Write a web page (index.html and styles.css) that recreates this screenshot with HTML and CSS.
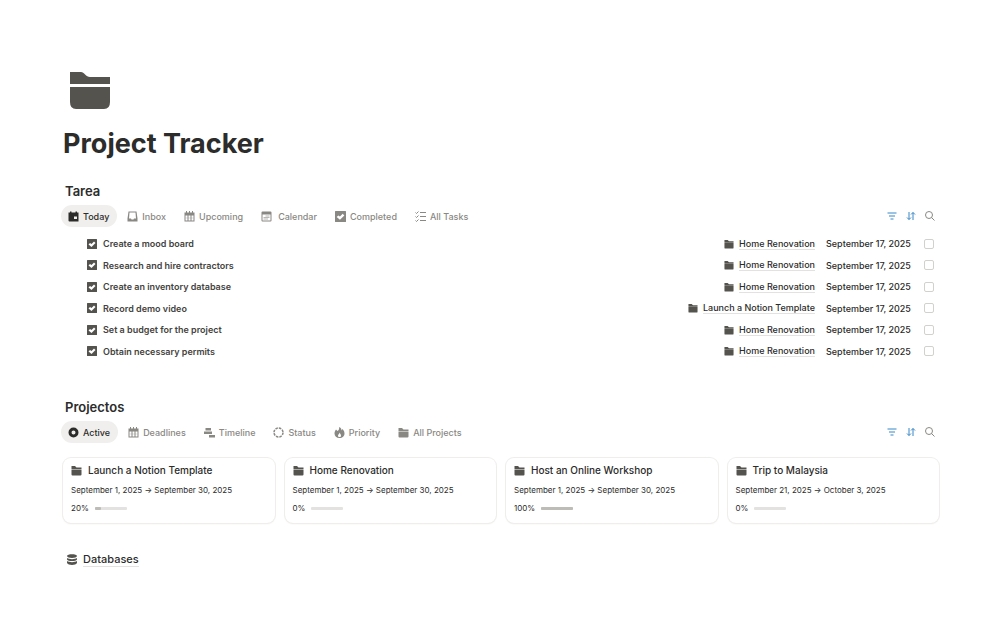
FILE: index.html
```html
<!DOCTYPE html>
<html lang="en">
<head>
    <meta charset="UTF-8">
    <meta name="viewport" content="width=device-width, initial-scale=1.0">
    <title>Project Tracker</title>
    <link rel="stylesheet" href="styles.css">
</head>
<body>
    <svg class="sprite" aria-hidden="true">
        <symbol id="folder" viewBox="0 0 40 37">
            <path d="M0 0h11c3 0 5 5 9 5h20v7H0zM0 15h40v15q0 7-6 7H6q-6 0-6-7z"/>
        </symbol>
        <symbol id="folder-small" viewBox="0 0 22 22">
            <path d="M1 2h7l3 3h10v3H1zM1 9h20v10q0 2-2 2H3q-2 0-2-2z"/>
        </symbol>
        <symbol id="check" viewBox="0 0 20 20">
            <path fill-rule="evenodd" d="M1 0h18q1 0 1 1v18q0 1-1 1H1q-1 0-1-1V1q0-1 1-1zM6 8L3 11l6 5 8-8-3-3-5 5z"/>
        </symbol>
        <symbol id="today" viewBox="0 0 22 22">
            <path fill-rule="evenodd" d="M1 3h3V1h3v2h8V1h3v2h3v18H3q-2 0-2-2zM12 11v5h6v-5z"/>
        </symbol>
        <symbol id="inbox" viewBox="0 0 22 22">
            <path fill-rule="evenodd" d="M3 1h16l2 14v6H1v-6zM5 3L4 15h4l1 2h4l1-2h4L17 3z"/>
        </symbol>
        <symbol id="month" viewBox="0 0 22 22">
            <path fill-rule="evenodd" d="M1 3h3V0h2v3h4V0h2v3h4V0h2v3h3v18H1zM3 9v10h4V9zm6 0v10h4V9zm6 0v10h4V9z"/>
            <path d="M3 13h16v2H3z" opacity=".3"/>
        </symbol>
        <symbol id="calendar" viewBox="0 0 22 22">
            <path fill-rule="evenodd" d="M3 1h16q2 0 2 2v16q0 2-2 2H3q-2 0-2-2V3q0-2 2-2zM3 7v12h16V7z"/>
            <path d="M9 9h8v2H9zM5 12h12v2H5zM5 15h9v2H5z" opacity=".6"/>
        </symbol>
        <symbol id="checklist" viewBox="0 0 22 22">
            <path d="M10 3h12M10 11h12M10 19h12M1 3l2 2 4-4M1 11l2 2 4-4M1 19l2 2 4-4" fill="none" stroke="currentColor" stroke-width="2"/>
        </symbol>
        <symbol id="active" viewBox="0 0 22 22">
            <circle cx="11" cy="11" r="7" fill="none" stroke="currentColor" stroke-width="6"/>
        </symbol>
        <symbol id="timeline" viewBox="0 0 22 22">
            <path d="M3 2h11v5H3zM0 9h16v5H0zM10 16h12v5H10z"/>
        </symbol>
        <symbol id="status" viewBox="0 0 22 22">
            <circle cx="11" cy="11" r="9" fill="none" stroke="currentColor" stroke-width="3" stroke-dasharray="5 2"/>
        </symbol>
        <symbol id="priority" viewBox="0 0 22 22">
            <path fill-rule="evenodd" d="M10 0c5 2 5 5 5 7l2-3c3 3 4 6 4 9 0 5-4 9-10 9S1 18 1 13c0-3 1-5 3-8l3 3c3-2 4-5 3-8zM11 11c0 3-3 4-3 6 0 2 1 3 3 3s3-1 3-3-2-4-3-6z"/>
        </symbol>
        <symbol id="filter" viewBox="0 0 20 20">
            <path d="M1 4h18M4 10h12M7 16h6" fill="none" stroke="currentColor" stroke-width="2"/>
        </symbol>
        <symbol id="sort" viewBox="0 0 20 20">
            <path d="M6 2v15M2 13l4 4 4-4M14 18V3M10 7l4-4 4 4" fill="none" stroke="currentColor" stroke-width="2"/>
        </symbol>
        <symbol id="search" viewBox="0 0 20 20">
            <path d="M13 13l6 6M15 8a7 7 0 1 1-14 0a7 7 0 1 1 14 0z" fill="none" stroke="currentColor" stroke-width="2"/>
        </symbol>
        <symbol id="database" viewBox="0 0 20 22">
            <path d="M0 4c0-5 20-5 20 0s-20 5-20 0zM0 8c4 3 16 3 20 0v3c-2 4-18 4-20 0zM0 14c4 3 16 3 20 0v4c-2 5-18 5-20 0z"/>
        </symbol>
    </svg>

    <main class="page">
        <header>
            <svg class="page-icon"><use href="#folder"/></svg>
            <h1>Project Tracker</h1>
        </header>

        <section class="tasks">
            <h2>Tarea</h2>
            <div class="toolbar">
                <nav class="tabs">
                    <button class="tab selected"><svg><use href="#today"/></svg>Today</button>
                    <button class="tab"><svg><use href="#inbox"/></svg>Inbox</button>
                    <button class="tab"><svg><use href="#month"/></svg>Upcoming</button>
                    <button class="tab wide"><svg><use href="#calendar"/></svg>Calendar</button>
                    <button class="tab"><svg><use href="#check"/></svg>Completed</button>
                    <button class="tab"><svg><use href="#checklist"/></svg>All Tasks</button>
                </nav>
                <div class="tools">
                    <button class="tool" aria-label="Filter"><svg><use href="#filter"/></svg></button>
                    <button class="tool" aria-label="Sort"><svg><use href="#sort"/></svg></button>
                    <button class="tool search" aria-label="Search"><svg><use href="#search"/></svg></button>
                </div>
            </div>
            <ul class="task-list">
                <li>
                    <svg><use href="#check"/></svg>
                    <label for="task1">Create a mood board</label>
                    <a href="#"><svg><use href="#folder-small"/></svg><span>Home Renovation</span></a>
                    <time>September 17, 2025</time>
                    <input type="checkbox" id="task1">
                </li>
                <li>
                    <svg><use href="#check"/></svg>
                    <label for="task2">Research and hire contractors</label>
                    <a href="#"><svg><use href="#folder-small"/></svg><span>Home Renovation</span></a>
                    <time>September 17, 2025</time>
                    <input type="checkbox" id="task2">
                </li>
                <li>
                    <svg><use href="#check"/></svg>
                    <label for="task3">Create an inventory database</label>
                    <a href="#"><svg><use href="#folder-small"/></svg><span>Home Renovation</span></a>
                    <time>September 17, 2025</time>
                    <input type="checkbox" id="task3">
                </li>
                <li>
                    <svg><use href="#check"/></svg>
                    <label for="task4">Record demo video</label>
                    <a href="#"><svg><use href="#folder-small"/></svg><span>Launch a Notion Template</span></a>
                    <time>September 17, 2025</time>
                    <input type="checkbox" id="task4">
                </li>
                <li>
                    <svg><use href="#check"/></svg>
                    <label for="task5">Set a budget for the project</label>
                    <a href="#"><svg><use href="#folder-small"/></svg><span>Home Renovation</span></a>
                    <time>September 17, 2025</time>
                    <input type="checkbox" id="task5">
                </li>
                <li>
                    <svg><use href="#check"/></svg>
                    <label for="task6">Obtain necessary permits</label>
                    <a href="#"><svg><use href="#folder-small"/></svg><span>Home Renovation</span></a>
                    <time>September 17, 2025</time>
                    <input type="checkbox" id="task6">
                </li>
            </ul>
        </section>

        <section class="projects">
            <h2>Projectos</h2>
            <div class="toolbar">
                <nav class="tabs">
                    <button class="tab selected"><svg><use href="#active"/></svg>Active</button>
                    <button class="tab"><svg><use href="#month"/></svg>Deadlines</button>
                    <button class="tab"><svg><use href="#timeline"/></svg>Timeline</button>
                    <button class="tab"><svg><use href="#status"/></svg>Status</button>
                    <button class="tab"><svg><use href="#priority"/></svg>Priority</button>
                    <button class="tab"><svg><use href="#folder-small"/></svg>All Projects</button>
                </nav>
                <div class="tools">
                    <button class="tool" aria-label="Filter"><svg><use href="#filter"/></svg></button>
                    <button class="tool" aria-label="Sort"><svg><use href="#sort"/></svg></button>
                    <button class="tool search" aria-label="Search"><svg><use href="#search"/></svg></button>
                </div>
            </div>
            <div class="cards">
                <article class="card">
                    <h3><svg><use href="#folder-small"/></svg>Launch a Notion Template</h3>
                    <p>September 1, 2025 → September 30, 2025</p>
                    <div class="progress">20%<span class="bar"><span style="width: 20%"></span></span></div>
                </article>
                <article class="card">
                    <h3><svg><use href="#folder-small"/></svg>Home Renovation</h3>
                    <p>September 1, 2025 → September 30, 2025</p>
                    <div class="progress">0%<span class="bar"><span style="width: 0%"></span></span></div>
                </article>
                <article class="card">
                    <h3><svg><use href="#folder-small"/></svg>Host an Online Workshop</h3>
                    <p>September 1, 2025 → September 30, 2025</p>
                    <div class="progress">100%<span class="bar"><span style="width: 100%"></span></span></div>
                </article>
                <article class="card">
                    <h3><svg><use href="#folder-small"/></svg>Trip to Malaysia</h3>
                    <p>September 21, 2025 → October 3, 2025</p>
                    <div class="progress">0%<span class="bar"><span style="width: 0%"></span></span></div>
                </article>
            </div>
        </section>

        <a href="#" class="databases"><svg><use href="#database"/></svg><span>Databases</span></a>
    </main>
</body>
</html>
```
FILE: styles.css
```css
* {
    margin: 0;
    padding: 0;
    box-sizing: border-box;
}

body {
    background-color: #fff;
    color: #2c2c2b;
    font-family: 'Inter', sans-serif;
    font-size: 9px;
    font-weight: 500;
}

svg {
    display: block;
    flex: none;
    fill: currentColor;
}

a {
    color: inherit;
    text-decoration: none;
}

button {
    border: 0;
    background: none;
    font: inherit;
    color: inherit;
    cursor: pointer;
}

.sprite {
    position: absolute;
    width: 0;
    height: 0;
}

.page {
    padding: 72px 66px 60px 63px;
}

.page-icon {
    width: 40px;
    height: 37px;
    margin-left: 7px;
    color: #55534e;
}

h1 {
    margin-top: 17px;
    font-size: 27px;
    font-weight: 700;
    line-height: 36px;
}

h2 {
    margin-left: 2px;
    font-size: 13px;
    font-weight: 600;
    line-height: 18px;
}

.tasks {
    margin-top: 20px;
}

.projects {
    margin-top: 36px;
}

/* View tabs */
.toolbar {
    display: flex;
    justify-content: space-between;
    align-items: center;
    margin: 5px 4px 0 -2px;
}

.tabs {
    display: flex;
    gap: 2px;
}

.tab {
    display: flex;
    align-items: center;
    gap: 4px;
    height: 22px;
    padding: 0 8px;
    border-radius: 11px;
    color: #8a8883;
}

.tab svg {
    width: 11px;
    height: 11px;
}

.wide {
    gap: 6px;
}

.selected {
    padding-left: 7px;
    background-color: #f0efed;
    color: #2c2c2b;
}

.tools {
    display: flex;
    gap: 9px;
}

.tool {
    color: #3486c8;
}

.tool svg {
    width: 10px;
    height: 10px;
}

.search {
    color: #8a8883;
}

/* Tasks */
.task-list {
    display: grid;
    grid-auto-rows: 1fr;
    height: 129px;
    margin-top: 6px;
    padding: 0 5px 0 24px;
    list-style: none;
}

.task-list li {
    display: flex;
    align-items: center;
}

.task-list svg {
    width: 10px;
    height: 10px;
    color: #55534e;
}

.task-list label {
    flex: 1;
    margin-left: 6px;
    font-weight: 600;
    color: #444340;
}

.task-list a {
    display: flex;
    align-items: center;
    gap: 5px;
}

.task-list a span,
.databases span {
    border-bottom: 1px solid #e3e2e0;
}

.task-list time {
    width: 88px;
    margin: 0 10px 0 11px;
}

.task-list input {
    appearance: none;
    width: 10px;
    height: 10px;
    border: 1px solid #d3d1cd;
    border-radius: 2px;
}

/* Project cards */
.cards {
    display: grid;
    grid-template-columns: repeat(4, 1fr);
    gap: 10px;
    margin-top: 15px;
}

.card {
    height: 65px;
    padding: 5px 8px;
    border-radius: 8px;
    box-shadow: 0 0 0 1px #efeeec, 0 1px 2px #f0efed;
}

.card h3 {
    display: flex;
    align-items: center;
    gap: 6px;
    font-size: 10px;
    font-weight: 500;
    line-height: 14px;
}

.card h3 svg {
    width: 11px;
    height: 11px;
    color: #55534e;
}

.card p {
    margin-top: 7px;
    font-size: 8px;
    font-weight: 400;
    line-height: 12px;
}

.progress {
    display: flex;
    align-items: center;
    gap: 6px;
    margin-top: 6px;
    font-size: 8px;
    font-weight: 400;
    line-height: 12px;
}

.bar {
    width: 32px;
    height: 3px;
    border-radius: 1px;
    background-color: #e3e2e0;
}

.bar span {
    display: block;
    height: 100%;
    border-radius: 1px;
    background-color: #bdbcb6;
}

.databases {
    display: inline-flex;
    align-items: center;
    gap: 6px;
    margin: 29px 0 0 4px;
    font-size: 11px;
    line-height: 14px;
}

.databases svg {
    width: 10px;
    height: 11px;
    color: #55534e;
}
```
